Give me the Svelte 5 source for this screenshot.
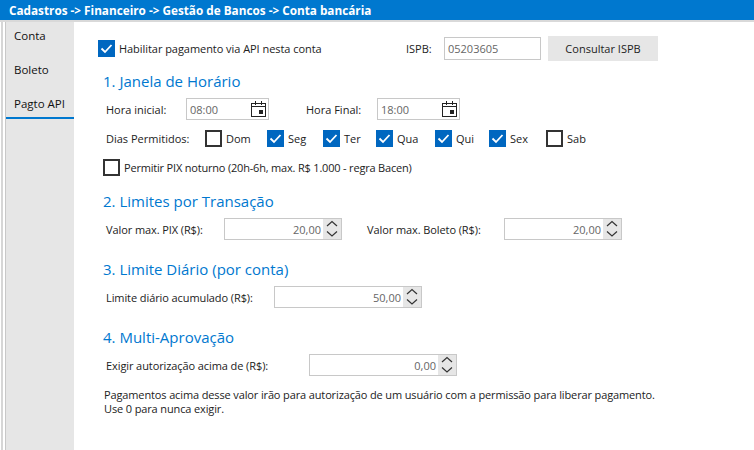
<script>
  const tabs = ['Conta', 'Boleto', 'Pagto API'];
  const days = [
    { label: 'Dom', on: false, w: 62 },
    { label: 'Seg', on: true, w: 56 },
    { label: 'Ter', on: true, w: 53 },
    { label: 'Qua', on: true, w: 59 },
    { label: 'Qui', on: true, w: 54 },
    { label: 'Sex', on: true, w: 57 },
    { label: 'Sab', on: false, w: 40 }
  ];
</script>

{#snippet check(on)}
  <span class="check" class:on>
    {#if on}
      <svg viewBox="0 0 17 17" fill="none" stroke="#fff" stroke-width="1.8">
        <polyline points="3.5 8.5 7 12 13.5 5"/>
      </svg>
    {/if}
  </span>
{/snippet}

{#snippet timeInput(value)}
  <span class="time">
    <span class="val">{value}</span>
    <svg viewBox="0 0 15 16" fill="none" stroke="#222" stroke-width="1">
      <rect x="0.5" y="2.5" width="14" height="13"/>
      <path d="M0.5 5.500h14M4.500 0v4M10.500 0v4"/>
      <rect x="8" y="9" width="4" height="4" fill="#222" stroke="none"/>
    </svg>
  </span>
{/snippet}

{#snippet spin(value, width)}
  <span class="num" style="width: {width}px">
    <span class="num-val">{value}</span>
    <span class="arrows">
      <svg viewBox="0 0 18 20" fill="none" stroke="#333" stroke-width="1.2">
        <polyline points="4 7 9 2.500 14 7"/>
        <polyline points="4 12.500 9 17 14 12.500"/>
      </svg>
    </span>
  </span>
{/snippet}

<div class="page">
  <header class="title">Cadastros -&gt; Financeiro -&gt; Gestão de Bancos -&gt; Conta bancária</header>
  <div class="body">
    <div class="edge"></div>
    <nav class="tabs">
      {#each tabs as tab, i}
        <div class="tab" class:active={i === 2}>{tab}</div>
      {/each}
    </nav>
    <main class="content">
      <div class="row top">
        <label class="enable">
          {@render check(true)}
          <span>Habilitar pagamento via API nesta conta</span>
        </label>
        <span class="ispb-label">ISPB:</span>
        <span class="ispb"><span class="val">05203605</span></span>
        <button class="consult">Consultar ISPB</button>
      </div>

      <h2 class="first">1. Janela de Horário</h2>
      <div class="row fields">
        <span class="lbl" style="width: 80px">Hora inicial:</span>
        {@render timeInput('08:00')}
        <span class="lbl final">Hora Final:</span>
        {@render timeInput('18:00')}
      </div>
      <div class="row days">
        <span class="lbl" style="width: 99px">Dias Permitidos:</span>
        {#each days as d}
          <span class="day" style="width: {d.w}px">
            {@render check(d.on)}
            <span>{d.label}</span>
          </span>
        {/each}
      </div>
      <label class="row night">
        {@render check(false)}
        <span>Permitir PIX noturno (20h-6h, max. R$ 1.000 - regra Bacen)</span>
      </label>

      <h2 class="h-limits">2. Limites por Transação</h2>
      <div class="row fields money">
        <span class="lbl" style="width: 118px">Valor max. PIX (R$):</span>
        {@render spin('20,00', 118)}
        <span class="lbl boleto">Valor max. Boleto (R$):</span>
        {@render spin('20,00', 118)}
      </div>

      <h2>3. Limite Diário (por conta)</h2>
      <div class="row fields money">
        <span class="lbl" style="width: 168px">Limite diário acumulado (R$):</span>
        {@render spin('50,00', 148)}
      </div>

      <h2>4. Multi-Aprovação</h2>
      <div class="row fields money">
        <span class="lbl" style="width: 203px">Exigir autorização acima de (R$):</span>
        {@render spin('0,00', 148)}
      </div>

      <p class="note">Pagamentos acima desse valor irão para autorização de um usuário com a permissão para liberar pagamento.<br>Use 0 para nunca exigir.</p>
    </main>
  </div>
</div>

<style>
  :global(body) {
    margin: 0;
    background: #fff;
  }

  .page {
    width: 754px;
    height: 450px;
    overflow: hidden;
    font-family: "Open Sans", "Noto Sans", sans-serif;
    font-size: 11px;
    color: #222;
    display: flex;
    flex-direction: column;
  }

  .title {
    height: 20px;
    line-height: 20px;
    flex-shrink: 0;
    padding-left: 9px;
    background: #0078cf;
    color: #fff;
    font-size: 11.75px;
    font-weight: 700;
    border-bottom: 2px solid #d9d9d9;
  }

  .body {
    flex: 1;
    display: flex;
    min-height: 0;
  }

  .edge {
    width: 2px;
    margin: 0 2px 0 1px;
    background: #d6d6d6;
    flex-shrink: 0;
  }

  .tabs {
    width: 68px;
    flex-shrink: 0;
    background: #e6e6e6;
    border-left: 1px solid #c8c8c8;
  }

  .tab {
    height: 29px;
    line-height: 28px;
    margin-bottom: 5px;
    padding-left: 8px;
    font-size: 11.5px;
    color: #111;
    box-sizing: border-box;
  }

  .tab.active {
    border-bottom: 2px solid #0078cf;
  }

  .content {
    flex: 1;
    min-width: 0;
    padding: 14px 0 0 24px;
    box-sizing: border-box;
  }

  .row {
    display: flex;
    align-items: center;
  }

  .top {
    height: 25px;
  }

  .enable {
    display: flex;
    align-items: center;
    gap: 4px;
    width: 308px;
    margin-top: -1px;
    letter-spacing: -0.05px;
  }

  .check {
    width: 17px;
    height: 17px;
    box-sizing: border-box;
    border: 2px solid #333;
    flex-shrink: 0;
    display: block;
  }

  .check.on {
    border: none;
    background: #0067c0;
  }

  .check svg {
    display: block;
    width: 17px;
    height: 17px;
  }

  .ispb-label {
    width: 38px;
  }

  .ispb {
    width: 97px;
    height: 23px;
    box-sizing: border-box;
    border: 1px solid #c8c8c8;
    line-height: 21px;
    padding-left: 3px;
    margin-right: 7px;
  }

  .val {
    color: #666;
  }

  .consult {
    width: 110px;
    height: 25px;
    border: none;
    background: #e6e6e6;
    font: inherit;
    color: #222;
    padding: 0;
  }

  h2 {
    margin: 0 0 0 5px;
    height: 22px;
    line-height: 22px;
    font-size: 15px;
    font-weight: 400;
    color: #0078cf;
    padding-top: 18px;
  }

  h2.first {
    padding-top: 9px;
  }

  h2.h-limits {
    padding-top: 14px;
  }

  .fields {
    margin: 6px 0 0 8px;
    height: 22px;
  }

  .money .lbl {
    letter-spacing: -0.09px;
  }

  .lbl {
    flex-shrink: 0;
  }

  .final {
    margin-left: 37px;
    width: 71px;
  }

  .boleto {
    margin-left: 25px;
    width: 137px;
  }

  .time {
    width: 83px;
    height: 22px;
    box-sizing: border-box;
    border: 1px solid #c8c8c8;
    display: flex;
    align-items: center;
    justify-content: space-between;
    padding: 0 2px 0 3px;
  }

  .time svg {
    width: 15px;
    height: 16px;
    display: block;
  }

  .days {
    margin: 10px 0 0 8px;
    height: 17px;
  }

  .day {
    display: flex;
    align-items: center;
    gap: 4px;
    flex-shrink: 0;
  }

  .night {
    margin: 12px 0 0 5px;
    gap: 4px;
    height: 17px;
    letter-spacing: -0.19px;
  }

  .num {
    height: 22px;
    box-sizing: border-box;
    border: 1px solid #c8c8c8;
    display: flex;
    align-items: center;
    justify-content: flex-end;
  }

  .num-val {
    color: #666;
    padding-right: 1px;
  }

  .arrows {
    width: 18px;
    height: 20px;
    background: #e6e6e6;
    margin-left: 1px;
    flex-shrink: 0;
  }

  .arrows svg {
    display: block;
    width: 18px;
    height: 20px;
  }

  .note {
    margin: 12px 0 0 6px;
    font-size: 11px;
    line-height: 14px;
    color: #222;
    white-space: nowrap;
    letter-spacing: -0.13px;
  }
</style>
